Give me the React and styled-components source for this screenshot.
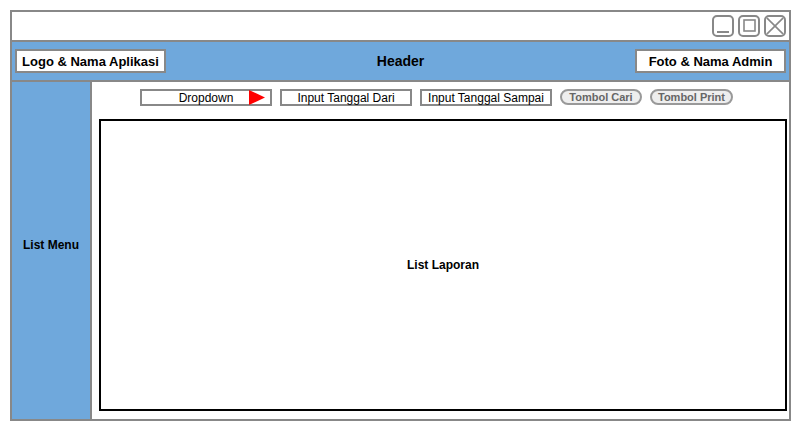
import React from "react";
import styled, { createGlobalStyle } from "styled-components";

const GlobalStyle = createGlobalStyle`
  body {
    margin: 0;
    background: #fff;
    font-family: "Liberation Sans", Arial, sans-serif;
  }
`;

export default function App() {
  return (
    <>
      <GlobalStyle />
      <Window>
        <TitleBar>
          <WinButton>
            <svg width="18" height="18" viewBox="0 0 18 18">
              <line x1="3" y1="15" x2="15" y2="15" stroke="#888" strokeWidth="2" />
            </svg>
          </WinButton>
          <WinButton>
            <svg width="18" height="18" viewBox="0 0 18 18">
              <rect x="4" y="3" width="11" height="11" fill="none" stroke="#888" strokeWidth="1.6" />
            </svg>
          </WinButton>
          <WinButton>
            <svg width="18" height="18" viewBox="0 0 18 18">
              <line x1="0" y1="0" x2="18" y2="18" stroke="#888" strokeWidth="1.6" />
              <line x1="18" y1="0" x2="0" y2="18" stroke="#888" strokeWidth="1.6" />
            </svg>
          </WinButton>
        </TitleBar>

        <Header>
          <HeaderBox>Logo &amp; Nama Aplikasi</HeaderBox>
          <HeaderTitle>Header</HeaderTitle>
          <HeaderBox>Foto &amp; Nama Admin</HeaderBox>
        </Header>

        <Body>
          <Sidebar>List Menu</Sidebar>
          <Content>
            <Toolbar>
              <Field>
                Dropdown
                <Arrow width="16" height="15" viewBox="0 0 16 15">
                  <polygon points="0,0 16,7.5 0,15" fill="#f00" />
                </Arrow>
              </Field>
              <Field>Input Tanggal Dari</Field>
              <Field>Input Tanggal Sampai</Field>
              <PillButton $w={82}>Tombol Cari</PillButton>
              <PillButton $w={83}>Tombol Print</PillButton>
            </Toolbar>
            <ReportBox>List Laporan</ReportBox>
          </Content>
        </Body>
      </Window>
    </>
  );
}

const Window = styled.div`
  margin: 10px 0 0 10px;
  width: 781px;
  height: 411px;
  box-sizing: border-box;
  border: 2px solid #888;
  display: flex;
  flex-direction: column;
`;

const TitleBar = styled.div`
  height: 28px;
  border-bottom: 2px solid #888;
  display: flex;
  justify-content: flex-end;
  align-items: center;
  gap: 4px;
  padding: 0 3px;
  box-sizing: content-box;
`;

const WinButton = styled.div`
  width: 22px;
  height: 22px;
  box-sizing: border-box;
  border: 2px solid #888;
  border-radius: 5px;
  display: flex;
  align-items: center;
  justify-content: center;
  overflow: hidden;
`;

const Header = styled.div`
  height: 38px;
  background: #6fa8dc;
  border-bottom: 2px solid #888;
  display: flex;
  align-items: center;
  justify-content: space-between;
  padding: 0 3px;
`;

const HeaderBox = styled.div`
  width: 151px;
  height: 24px;
  box-sizing: border-box;
  border: 2px solid #888;
  background: #fff;
  display: flex;
  align-items: center;
  justify-content: center;
  font-size: 13px;
  font-weight: bold;
  color: #000;
`;

const HeaderTitle = styled.div`
  font-size: 14px;
  font-weight: bold;
  color: #000;
`;

const Body = styled.div`
  flex: 1;
  display: flex;
  min-height: 0;
`;

const Sidebar = styled.div`
  width: 78px;
  background: #6fa8dc;
  border-right: 2px solid #888;
  display: flex;
  align-items: center;
  justify-content: center;
  padding-bottom: 12px;
  font-size: 12px;
  font-weight: bold;
  color: #000;
`;

const Content = styled.div`
  flex: 1;
  display: flex;
  flex-direction: column;
  padding: 7px 2px 8px 7px;
`;

const Toolbar = styled.div`
  display: flex;
  align-items: center;
  gap: 8px;
  padding-left: 41px;
  height: 17px;
`;

const Field = styled.div`
  position: relative;
  width: 132px;
  height: 17px;
  box-sizing: border-box;
  border: 2px solid #888;
  background: #fff;
  display: flex;
  align-items: center;
  justify-content: center;
  font-size: 12px;
  color: #000;
`;

const Arrow = styled.svg`
  position: absolute;
  right: 5px;
  top: -1px;
`;

const PillButton = styled.div`
  width: ${(p) => p.$w}px;
  height: 16px;
  box-sizing: border-box;
  border: 2px solid #999;
  border-radius: 9px;
  background: #eee;
  display: flex;
  align-items: center;
  justify-content: center;
  font-size: 11px;
  font-weight: bold;
  color: #666;
  margin-top: -2px;
`;

const ReportBox = styled.div`
  flex: 1;
  margin-top: 13px;
  border: 2px solid #000;
  display: flex;
  align-items: center;
  justify-content: center;
  font-size: 12px;
  font-weight: bold;
  color: #000;
`;
